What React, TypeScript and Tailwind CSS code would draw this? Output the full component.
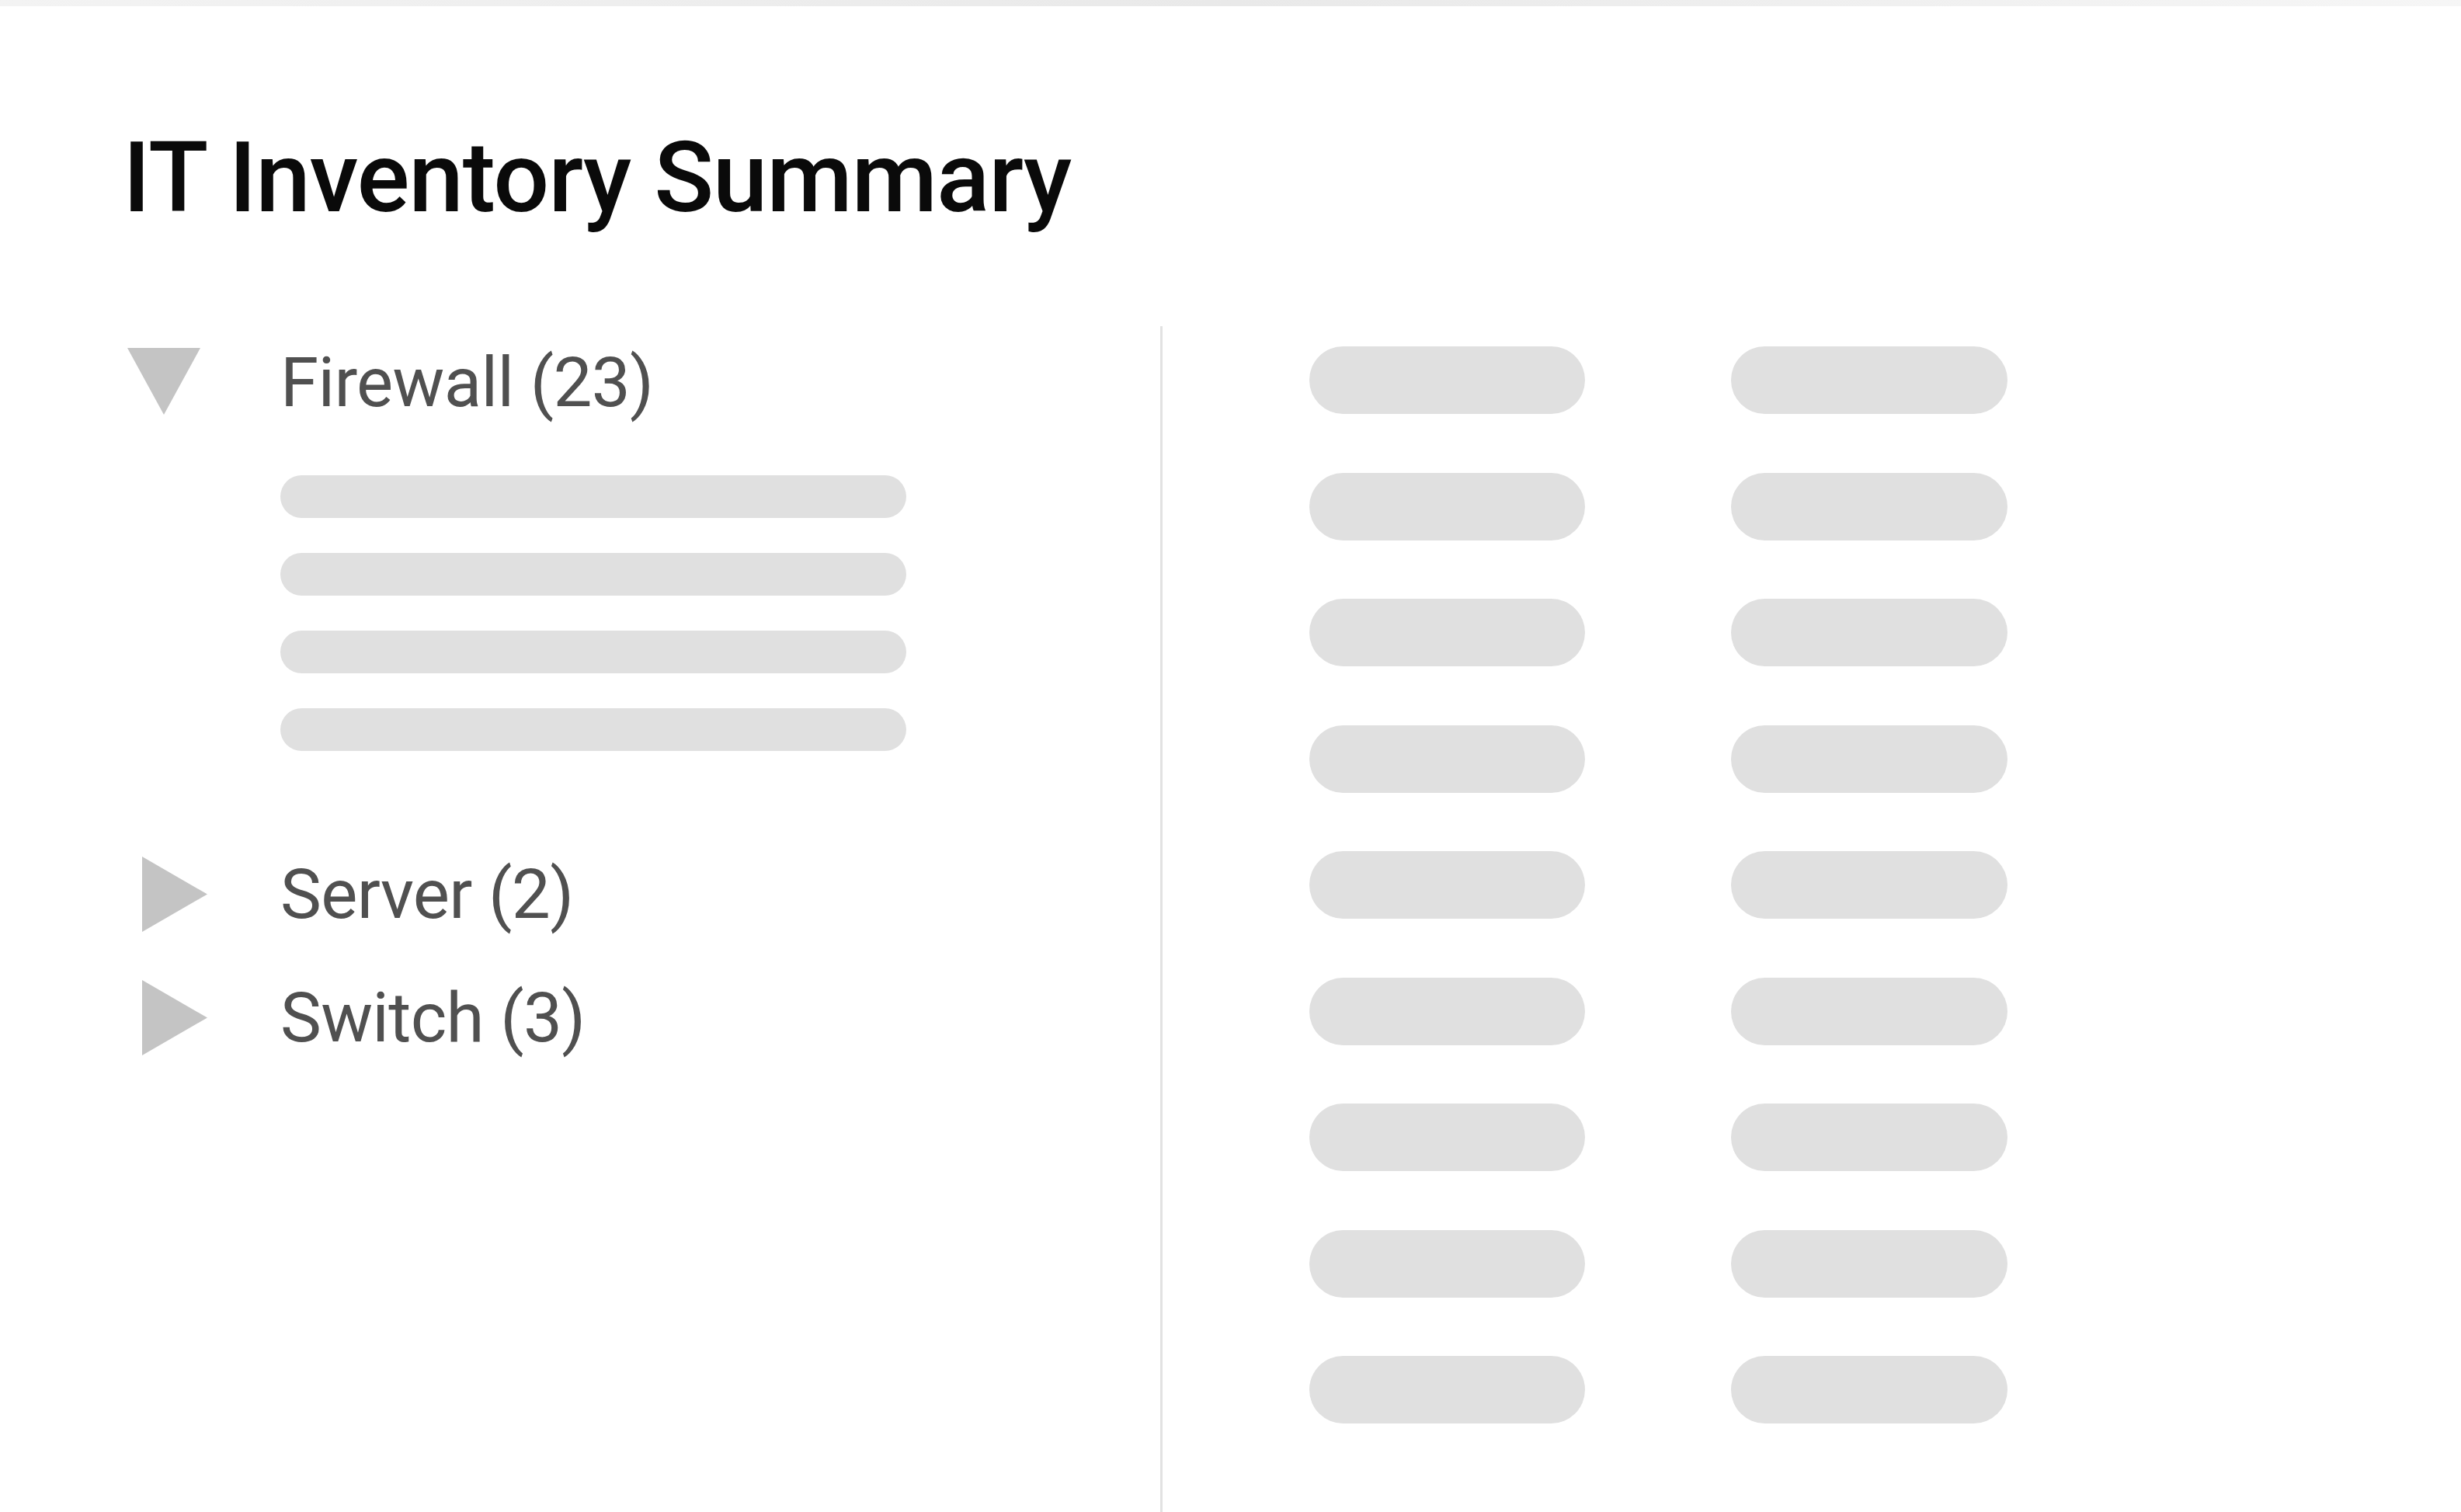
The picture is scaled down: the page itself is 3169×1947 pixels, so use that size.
import React from "react";

const font = { fontFamily: "Roboto, 'Noto Sans', sans-serif" };

function DownTri() {
  return (
    <svg width="94" height="86" viewBox="0 0 94 86" className="shrink-0">
      <polygon points="0,0 94,0 47,86" fill="#c4c4c4" />
    </svg>
  );
}

function RightTri() {
  return (
    <svg width="84" height="97" viewBox="0 0 84 97" className="shrink-0">
      <polygon points="0,0 84,48.5 0,97" fill="#c4c4c4" />
    </svg>
  );
}

export default function App() {
  const rows = Array.from({ length: 9 });
  return (
    <div className="h-[1947px] w-[3169px] bg-white flex flex-col overflow-hidden" style={font}>
      <div className="h-[8px] w-full bg-gradient-to-r from-[#f3f3f3] via-[#e9e9e9] to-[#f6f6f6] shrink-0" />
      <div className="flex-1 flex flex-col pl-[158px] pt-[157px]">
        <h1 className="text-[127px] leading-none font-medium text-[#0a0a0a] tracking-[-1.25px]">
          IT Inventory Summary
        </h1>
        <div className="flex-1 flex mt-[128px]">
          <div className="w-[1336px] flex flex-col pt-[28px]">
            <div className="flex items-start">
              <div className="ml-[6px]">
                <DownTri />
              </div>
              <span className="ml-[103px] text-[89px] leading-none text-[#505050] tracking-[-0.7px]">Firewall (23)</span>
            </div>
            <div className="mt-[75px] pl-[203px] flex flex-col gap-[45px]">
              <div className="h-[55px] w-[806px] rounded-full bg-[#e0e0e0]" />
              <div className="h-[55px] w-[806px] rounded-full bg-[#e0e0e0]" />
              <div className="h-[55px] w-[806px] rounded-full bg-[#e0e0e0]" />
              <div className="h-[55px] w-[806px] rounded-full bg-[#e0e0e0]" />
            </div>
            <div className="mt-[136px] flex items-center">
              <div className="ml-[25px]">
                <RightTri />
              </div>
              <span className="ml-[94px] text-[89px] leading-none text-[#505050] tracking-[-0.7px]">Server (2)</span>
            </div>
            <div className="mt-[62px] flex items-center">
              <div className="ml-[25px]">
                <RightTri />
              </div>
              <span className="ml-[94px] text-[89px] leading-none text-[#505050] tracking-[-0.7px]">Switch (3)</span>
            </div>
          </div>
          <div className="w-[3px] bg-[#e2e2e2] self-stretch" />
          <div className="pl-[189px] pt-[26px]">
            <div className="grid grid-cols-[355px_356px] gap-x-[188px] gap-y-[75.5px]">
              {rows.map((_, i) => (
                <React.Fragment key={i}>
                  <div className="h-[87px] rounded-full bg-[#e0e0e0]" />
                  <div className="h-[87px] rounded-full bg-[#e0e0e0]" />
                </React.Fragment>
              ))}
            </div>
          </div>
        </div>
      </div>
    </div>
  );
}
